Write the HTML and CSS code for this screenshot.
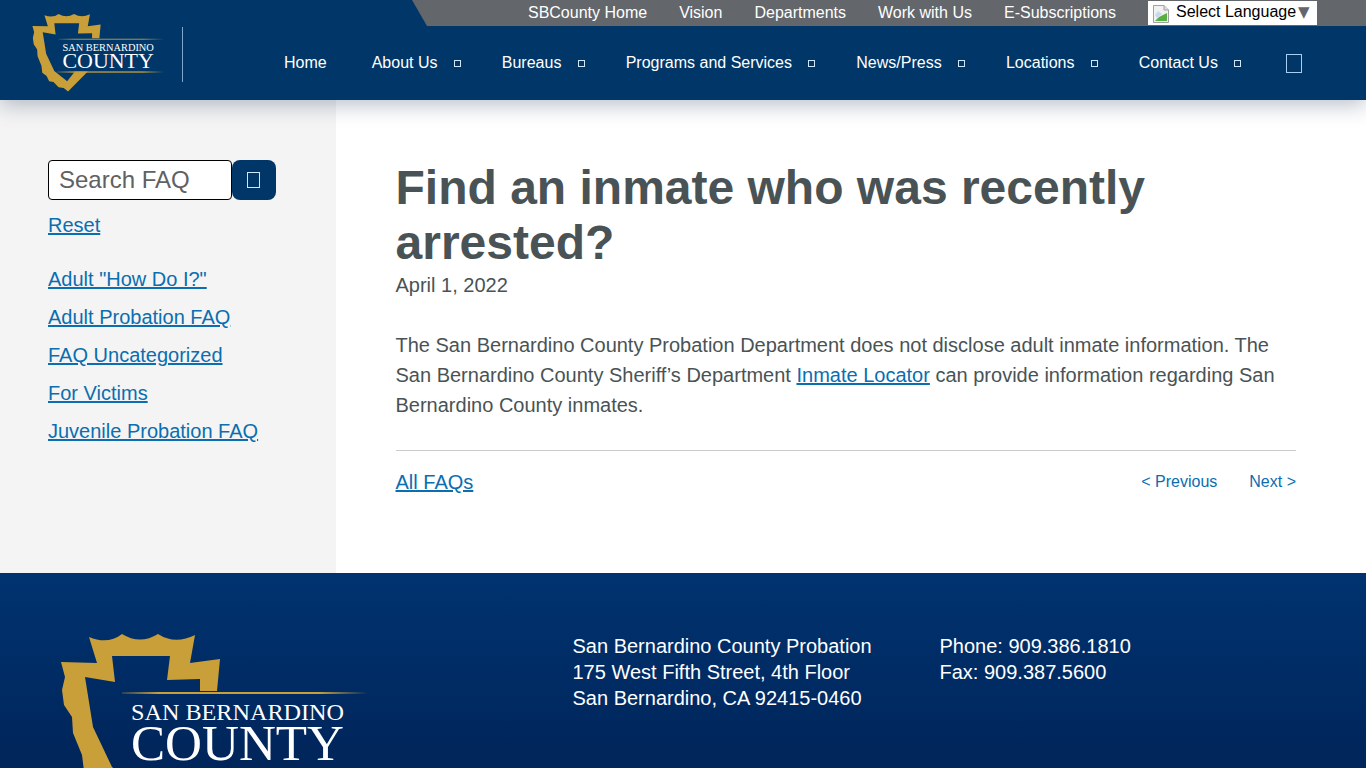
FILE: index.html
```html
<!DOCTYPE html>
<html lang="en">
<head>
<meta charset="utf-8">
<title>Find an inmate who was recently arrested?</title>
<link rel="stylesheet" href="styles.css">
</head>
<body>
<svg class="defs" width="0" height="0" aria-hidden="true">
  <defs>
    <linearGradient id="rule" x1="0" x2="1" y1="0" y2="0">
      <stop offset="0" stop-color="#c99f3a" stop-opacity="0.2"/>
      <stop offset="0.15" stop-color="#c99f3a"/>
      <stop offset="0.8" stop-color="#c99f3a"/>
      <stop offset="1" stop-color="#c99f3a" stop-opacity="0"/>
    </linearGradient>
    <symbol id="seal" viewBox="0 0 310 182">
      <path fill="#c99f3a" d="M29,4 Q48,12 62,1 Q80,12 98,1 Q115,12 135,2 L130,30 L160,26 L157,58 L140,58 L140,46 L107,47 L110,23 L52,23 L55,49 L25,44 L33,94 L52,134 L82,158 L100,135 L130,135 L84,182 L74,174 L62,172 L50,160 L40,158 L34,146 L24,138 L22,122 L13,100 L12,84 L4,72 L2,57 L5,44 L1,29 L37,30 Z"/>
      <rect x="62" y="59" width="246" height="2" fill="url(#rule)"/>
      <rect x="58" y="135" width="250" height="3" fill="url(#rule)"/>
      <text class="seal-top" x="71" y="87" textLength="213" lengthAdjust="spacingAndGlyphs">SAN BERNARDINO</text>
      <text class="seal-bottom" x="71" y="127" textLength="213" lengthAdjust="spacingAndGlyphs">COUNTY</text>
    </symbol>
  </defs>
</svg>

<header class="site-header">
  <div class="brand">
    <svg class="brand-logo"><use href="#seal"/></svg>
    <span class="brand-rule"></span>
  </div>
  <div class="top-bar">
    <a href="#">SBCounty Home</a>
    <a href="#">Vision</a>
    <a href="#">Departments</a>
    <a href="#">Work with Us</a>
    <a href="#">E-Subscriptions</a>
    <div class="translate">
      <svg class="broken" viewBox="0 0 18 18" width="18" height="18">
        <path d="M1.500,0.500 H12 L16.500,5 V17.500 H1.500 Z" fill="#f1f1f1" stroke="#a0a0a0"/>
        <path d="M12,0.500 V5 H16.500" fill="#dcdcdc" stroke="#a0a0a0"/>
        <path d="M3,16 L7,12 L15,8 V16 Z" fill="#58b045"/>
        <path d="M3,10 L6,6 L10,9 L5,13 Z" fill="#c9d9ec"/>
      </svg>
      <span>Select Language</span><span class="caret">▼</span>
    </div>
  </div>
  <nav class="main-nav">
    <a href="#">Home</a>
    <a href="#" class="has-sub">About Us<i class="tofu"></i></a>
    <a href="#" class="has-sub">Bureaus<i class="tofu"></i></a>
    <a href="#" class="has-sub">Programs and Services<i class="tofu"></i></a>
    <a href="#" class="has-sub">News/Press<i class="tofu"></i></a>
    <a href="#" class="has-sub">Locations<i class="tofu"></i></a>
    <a href="#" class="has-sub">Contact Us<i class="tofu"></i></a>
    <i class="tofu-large"></i>
  </nav>
</header>

<div class="page">
  <aside class="sidebar">
    <form class="search">
      <input class="search-input" type="text" placeholder="Search FAQ">
      <button class="search-btn" type="button"><i class="tofu-btn"></i></button>
    </form>
    <a class="reset" href="#">Reset</a>
    <ul class="cats">
      <li><a href="#">Adult "How Do I?"</a></li>
      <li><a href="#">Adult Probation FAQ</a></li>
      <li><a href="#">FAQ Uncategorized</a></li>
      <li><a href="#">For Victims</a></li>
      <li><a href="#">Juvenile Probation FAQ</a></li>
    </ul>
  </aside>
  <main class="content">
    <h1>Find an inmate who was recently arrested?</h1>
    <p class="date">April 1, 2022</p>
    <p class="body-text">The San Bernardino County Probation Department does not disclose adult inmate information. The San Bernardino County Sheriff’s Department <a href="#">Inmate Locator</a> can provide information regarding San Bernardino County inmates.</p>
    <div class="pager">
      <a class="all" href="#">All FAQs</a>
      <div class="prevnext">
        <a href="#">&lt; Previous</a>
        <a href="#">Next &gt;</a>
      </div>
    </div>
  </main>
</div>

<footer class="site-footer">
  <svg class="footer-logo"><use href="#seal"/></svg>
  <address class="addr">San Bernardino County Probation<br>175 West Fifth Street, 4th Floor<br>San Bernardino, CA 92415-0460</address>
  <div class="phones">Phone: 909.386.1810<br>Fax: 909.387.5600</div>
</footer>
</body>
</html>
```
FILE: styles.css
```css
* { box-sizing: border-box; }
html, body { margin: 0; padding: 0; }
body {
  font-family: "Liberation Sans", Arial, sans-serif;
  font-size: 20px;
  color: #495355;
  background: #fff;
  overflow-x: hidden;
}
.defs { display: block; height: 0; }
.seal-top, .seal-bottom { font-family: "Liberation Serif", serif; fill: #fff; }
.seal-top { font-size: 24px; }
.seal-bottom { font-size: 50px; }

/* Header */
.site-header {
  display: grid;
  grid-template-columns: 236px 1fr;
  grid-template-rows: 26px 74px;
  background: #003768;
  position: relative;
  z-index: 2;
  box-shadow: 0 5px 20px rgba(0, 30, 70, 0.28);
}
.brand {
  grid-row: 1 / 3;
  display: flex;
  align-items: flex-start;
  padding: 13px 0 0 31.5px;
}
.brand-logo { width: 133px; height: 79px; flex: none; }
.brand-rule {
  width: 1px;
  height: 55px;
  margin: 14px 0 0 17.5px;
  background: #7ea6cf;
}
.top-bar {
  margin-left: 176px;
  padding-right: 49px;
  display: flex;
  justify-content: flex-end;
  align-items: center;
  gap: 32px;
  background: #63666a;
  clip-path: polygon(0 0, 100% 0, 100% 100%, 15px 100%);
  font-size: 16px;
}
.top-bar a { color: #fff; text-decoration: none; }
.translate {
  width: 169px;
  height: 24px;
  background: #fff;
  color: #000;
  display: flex;
  align-items: center;
  padding-left: 4px;
  line-height: 20px;
}
.translate span { position: relative; top: -1px; }
.broken { flex: none; margin-right: 6px; margin-top: 2px; }
.caret { color: #63666a; margin-left: 2px; font: 15px/20px "DejaVu Sans", sans-serif; }

.main-nav {
  display: flex;
  align-items: center;
  gap: 41px;
  padding: 0 0 0 48px;
  font-size: 16px;
}
.main-nav a {
  color: #fff;
  text-decoration: none;
  display: flex;
  align-items: center;
}
.main-nav a:first-child { margin-right: 4px; }
.tofu {
  display: block;
  width: 7px;
  height: 7px;
  margin-left: 16.3px;
  border: 1px solid #cfe6fb;
}
.tofu-large {
  display: block;
  width: 16px;
  height: 19px;
  margin: 1px 0 0 4px;
  border: 1px solid #a8cff2;
}

/* Main */
.page {
  display: grid;
  grid-template-columns: 336px 1fr;
  height: 473px;
}
.sidebar {
  background: #f4f4f4;
  padding: 60px 48px 0;
}
.search { display: flex; }
.search-input {
  width: 184px;
  height: 40px;
  padding: 0 10px;
  border: 1px solid #000;
  border-radius: 4px;
  background: #fff;
  font: 24px "Liberation Sans", Arial, sans-serif;
  color: #495355;
}
.search-input::placeholder { color: #5f6163; opacity: 1; }
.search-btn {
  width: 44px;
  height: 40px;
  padding: 0;
  border: 0;
  border-radius: 8px;
  background: #003768;
  display: flex;
  align-items: center;
  justify-content: center;
}
.tofu-btn {
  display: block;
  width: 13px;
  height: 16px;
  margin-right: 2px;
  border: 1px solid #cfe6fb;
}
a { color: #0a6eb0; }
.reset { display: inline-block; margin-top: 13px; line-height: 24px; }
.cats { list-style: none; margin: 30px 0 0; padding: 0; }
.cats li { line-height: 24px; margin-bottom: 14px; }

.content { padding: 60px 70px 0 59.5px; }
h1 {
  margin: 0;
  font-size: 48px;
  line-height: 55px;
  font-weight: 700;
  color: #495355;
}
.date { margin: 1px 0 0; line-height: 28px; }
.body-text {
  margin: 31px 0 0;
  line-height: 30px;
  padding-bottom: 30px;
  border-bottom: 1px solid #ccc;
}
.pager {
  display: flex;
  justify-content: space-between;
  align-items: center;
  margin-top: 19px;
  line-height: 24px;
}
.prevnext { display: flex; gap: 32px; font-size: 16px; }
.prevnext a { text-decoration: none; }

/* Footer */
.site-footer {
  display: flex;
  align-items: flex-start;
  height: 240px;
  padding: 60px 0 0 60px;
  background: linear-gradient(#003370, #00255a 195px);
  color: #fff;
  line-height: 26px;
  overflow: hidden;
}
.footer-logo { width: 310px; height: 182px; flex: none; }
.addr { font-style: normal; margin: 0 0 0 202.5px; width: 367px; }
.phones { }
```
